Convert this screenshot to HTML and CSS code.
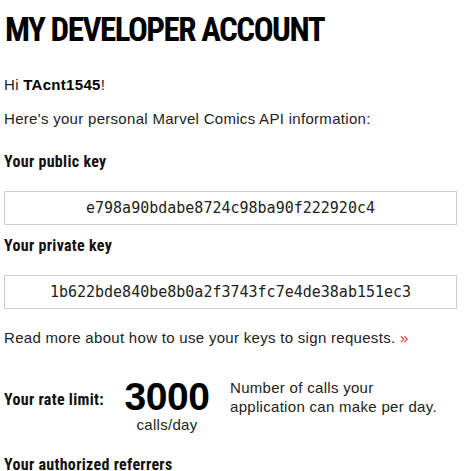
FILE: index.html
```html
<!DOCTYPE html>
<html lang="en">
<head>
<meta charset="utf-8">
<title>My Developer Account</title>
<link rel="stylesheet" href="styles.css">
</head>
<body>
<main class="account">
  <h1 class="title">MY DEVELOPER ACCOUNT</h1>
  <p class="text greeting">Hi <strong>TAcnt1545</strong>!</p>
  <p class="text intro">Here's your personal Marvel Comics API information:</p>

  <h2 class="label">Your public key</h2>
  <div class="key-box">e798a90bdabe8724c98ba90f222920c4</div>

  <h2 class="label label-private">Your private key</h2>
  <div class="key-box">1b622bde840be8b0a2f3743fc7e4de38ab151ec3</div>

  <p class="text readmore">Read more about how to use your keys to sign requests. <a class="more-link" href="#">»</a></p>

  <section class="rate">
    <h2 class="label rate-label">Your rate limit:</h2>
    <div class="rate-value">
      <span class="rate-number">3000</span>
      <span class="rate-unit">calls/day</span>
    </div>
    <p class="text rate-desc">Number of calls your application can make per day.</p>
  </section>

  <h2 class="label referrers">Your authorized referrers</h2>
</main>
</body>
</html>
```
FILE: styles.css
```css
html, body {
  margin: 0;
  padding: 0;
  background: #fff;
}

.account {
  width: 453px;
  padding: 0 0 0 4px;
  color: #222;
  font-family: "Liberation Sans", Arial, sans-serif;
}

.title {
  margin: 12px 0 0 1px;
  font-family: "Liberation Sans Narrow", "Roboto", sans-serif;
  font-stretch: condensed;
  font-weight: 700;
  font-size: 33px;
  line-height: 36px;
  color: #000;
  letter-spacing: -1.5px;
}

.text {
  margin: 0;
  font-size: 15px;
  line-height: 20px;
  letter-spacing: 0.3px;
  color: #222;
}

.text strong {
  color: #000;
}

.greeting {
  margin-top: 27px;
}

.intro {
  margin-top: 14px;
}

.label {
  margin: 0;
  font-family: "Liberation Sans Narrow", "Roboto", sans-serif;
  font-stretch: condensed;
  font-weight: 700;
  font-size: 16px;
  line-height: 18px;
  letter-spacing: 0.3px;
  color: #111;
}

.intro + .label {
  margin-top: 24px;
}

.key-box {
  margin-top: 20px;
  height: 32px;
  border: 1px solid #ccc;
  display: flex;
  align-items: center;
  justify-content: center;
  font-family: "DejaVu Sans Mono", monospace;
  font-size: 15px;
  color: #222;
}

.label-private {
  margin-top: 12px;
}

.readmore {
  margin-top: 19px;
}

.more-link {
  color: #e62429;
  text-decoration: none;
}

.rate {
  margin-top: 30px;
  display: flex;
  align-items: flex-start;
}

.rate-label {
  margin-top: 13px;
  width: 119px;
}

.rate-value {
  display: flex;
  flex-direction: column;
  align-items: center;
  width: 88px;
}

.rate-number {
  font-weight: 700;
  font-size: 39px;
  line-height: 38px;
  color: #000;
  letter-spacing: -0.5px;
}

.rate-unit {
  font-size: 15px;
  line-height: 18px;
  color: #222;
  letter-spacing: 0.3px;
}

.rate-desc {
  margin-left: 19px;
  width: 220px;
  line-height: 19px;
}

.referrers {
  margin-top: 22px;
}
```
